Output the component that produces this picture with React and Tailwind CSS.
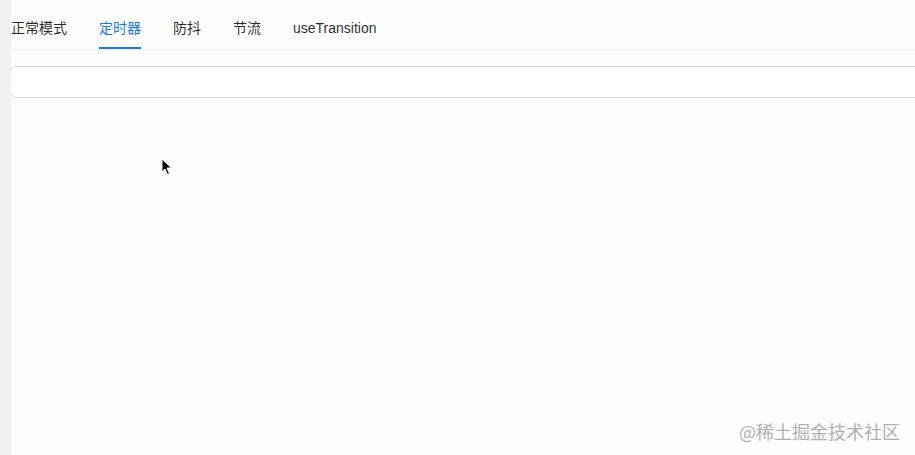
import React from "react";

const tabs = ["正常模式", "定时器", "防抖", "节流", "useTransition"];

export default function App() {
  return (
    <div
      className="relative flex h-[455px] w-[915px] overflow-hidden bg-[#fefefe]"
      style={{ fontFamily: '"Liberation Sans", "Noto Sans CJK SC", sans-serif' }}
    >
      <div className="h-full w-[11px] shrink-0 bg-[#f1f1f1]" />
      <div className="min-w-0 flex-1 overflow-hidden pt-[3px]">
        <div className="flex border-b border-[#f0f0f0]">
          {tabs.map((t, i) => (
            <div
              key={t}
              className={`relative pt-[14px] pb-[10px] text-sm leading-[22px] ${
                i === 0 ? "" : "ml-8"
              } ${i === 1 ? "text-[#1677ff]" : "text-[#000000d9]"}`}
            >
              {t}
              {i === 1 && (
                <div className="absolute bottom-0 left-0 right-0 h-[2px] bg-[#1677ff]" />
              )}
            </div>
          ))}
        </div>
        <div className="mt-4 -ml-px h-8 w-[940px] rounded-md border border-[#d9d9d9] bg-white" />
      </div>
      <svg
        className="absolute left-[161px] top-[158px]"
        width="12"
        height="18"
        viewBox="0 0 12 18"
      >
        <path
          d="M1 1 L1 14 L4 11 L6.5 16.5 L8.5 15.5 L6 10 L10.5 10 Z"
          fill="#000"
          stroke="#fff"
          strokeWidth="1"
        />
      </svg>
      <div
        className="absolute left-[739px] top-[419px] text-[18px] leading-[24px] text-[#b0b0b0]"
        style={{ fontFamily: '"Noto Sans CJK SC", sans-serif' }}
      >
        @稀土掘金技术社区
      </div>
    </div>
  );
}
